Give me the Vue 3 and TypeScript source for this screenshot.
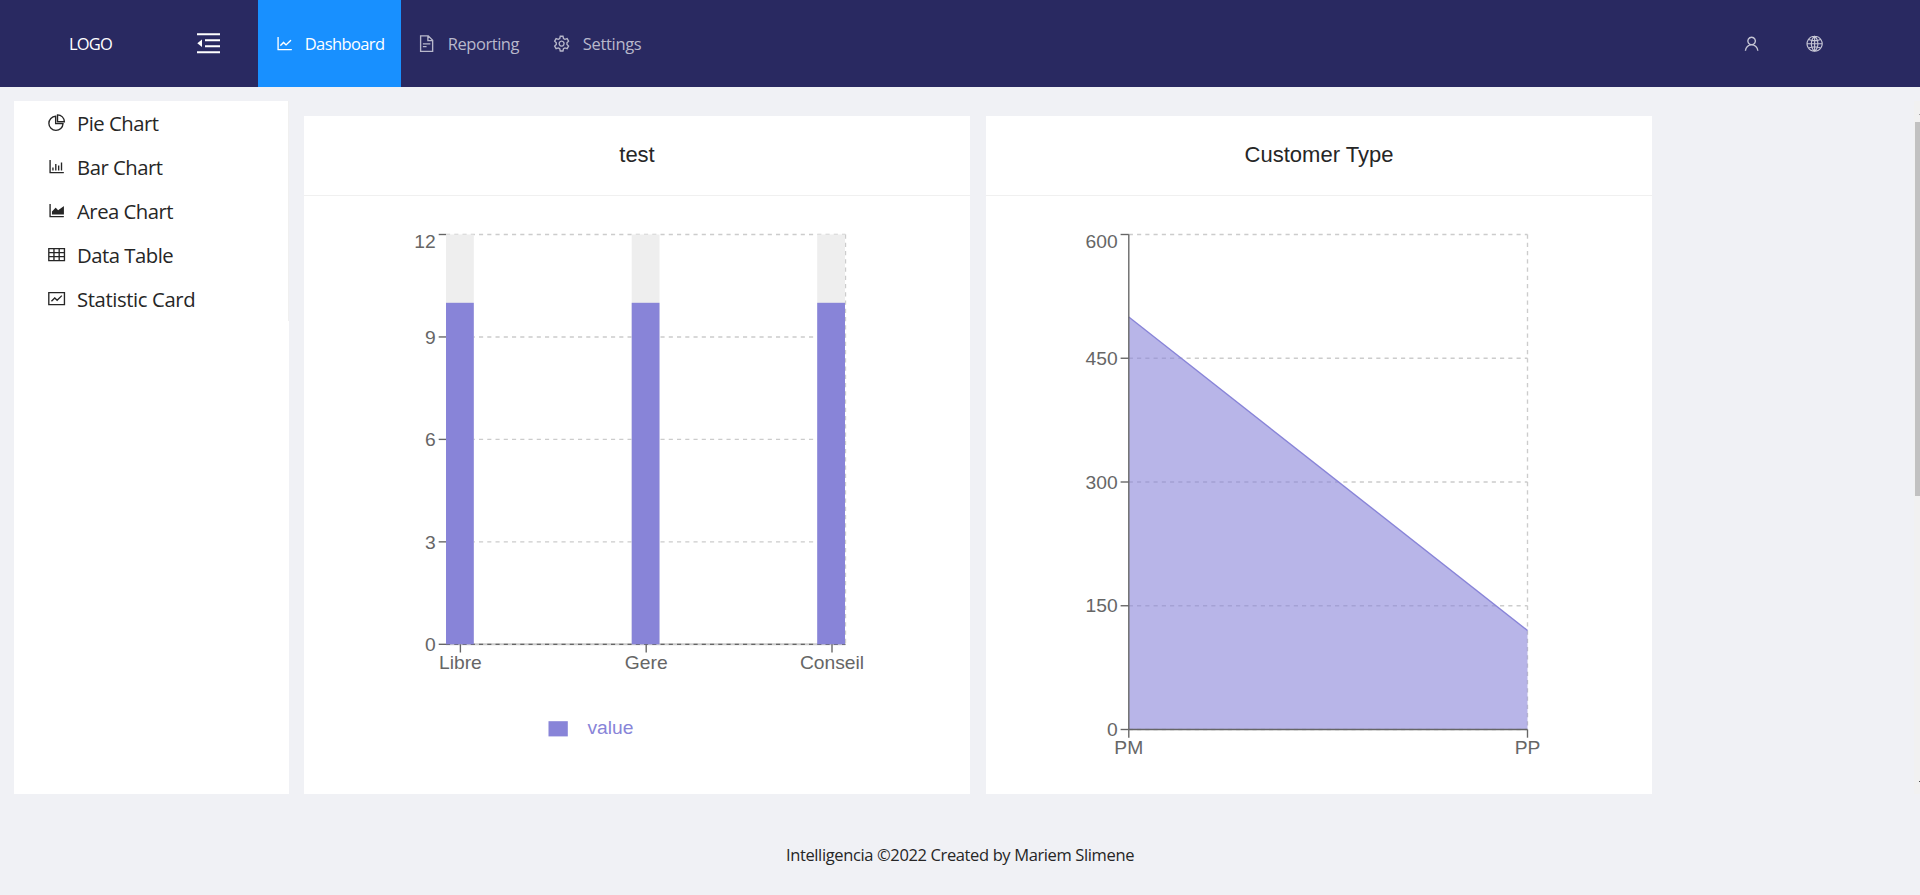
<script setup lang="ts">
type IconName = 'line' | 'file' | 'gear' | 'pie' | 'bar' | 'area' | 'table' | 'fund'

interface Entry {
  label: string
  icon: IconName
  cls: string
}

const nav: Entry[] = [
  { label: 'Dashboard', icon: 'line', cls: 'dashboard' },
  { label: 'Reporting', icon: 'file', cls: 'reporting' },
  { label: 'Settings', icon: 'gear', cls: 'settings' },
]

const tools: Entry[] = [
  { label: 'Pie Chart', icon: 'pie', cls: 't-pie' },
  { label: 'Bar Chart', icon: 'bar', cls: 't-bar' },
  { label: 'Area Chart', icon: 'area', cls: 't-area' },
  { label: 'Data Table', icon: 'table', cls: 't-table' },
  { label: 'Statistic Card', icon: 'fund', cls: 't-stat' },
]

const axes =
  'M888 792H200V168c0-4.4-3.6-8-8-8h-56c-4.4 0-8 3.6-8 8v688c0 4.4 3.6 8 8 8h752c4.4 0 8-3.6 8-8v-56c0-4.4-3.6-8-8-8z'

const filled: Partial<Record<IconName, string>> = {
  line:
    axes +
    'M305.8 637.7c3.1 3.1 8.1 3.1 11.3 0l138.3-137.6L583 628.5c3.1 3.1 8.2 3.1 11.3 0l275.4-275.3c3.1-3.1 3.1-8.2 0-11.3l-39.6-39.6c-3.1-3.1-8.2-3.1-11.3 0l-230 229.9L461.4 404c-3.1-3.1-8.2-3.1-11.3 0L266.3 586.7c-3.1 3.1-3.1 8.2 0 11.3l39.5 39.7z',
  bar: axes + 'M280 552h72v160h-72zM432 376h72v336h-72zM584 454h72v258h-72zM736 296h72v416h-72z',
  area:
    axes +
    'M272 720h620c4.4 0 8-3.6 8-8V284c0-7.2-8.7-10.7-13.7-5.7L592 488.6l-125.4-124a8 8 0 0 0-11.3 0l-189 189.6a7.9 7.9 0 0 0-2.3 5.6V712c0 4.4 3.6 8 8 8z',
}

const stroked: Partial<Record<IconName, string>> = {
  file: 'M192 100H600L832 332V924H192ZM580 100V352H832M312 524H712M312 672H508',
  pie: 'M460 172A376 376 0 1 0 852 564H460ZM560 100A364 364 0 0 1 924 464H560Z',
  table: 'M96 196H928V828H96ZM96 406H928M96 616H928M370 196V828M648 196V828',
  fund: 'M96 196H928V828H96ZM236 650L412 474L540 602L790 352',
  gear:
    'M440 122H584L612 240L688 284L806 248L882 378L796 466V558L882 646L806 776L688 740L612 784L584 902H440L412 784L336 740L218 776L142 646L228 558V466L142 378L218 248L336 284L412 240ZM512 382A130 130 0 1 1 511 382Z',
}

const barLeft = 142
const barTop = 38.5
const barBottom = 448.3
const barTicks = [12, 9, 6, 3, 0].map((v) => ({
  v,
  y: barBottom - (v / 12) * (barBottom - barTop),
}))
const bars = [
  { name: 'Libre', x: 142, tick: 156.4 },
  { name: 'Gere', x: 327.7, tick: 342.2 },
  { name: 'Conseil', x: 513.2, tick: 528 },
].map((b) => ({ ...b, value: 10 }))
const barY = barBottom - (10 / 12) * (barBottom - barTop)

const areaTop = 38.5
const areaBottom = 533.5
const scaleArea = (v: number) => areaBottom - (v / 600) * (areaBottom - areaTop)
const areaTicks = [600, 450, 300, 150, 0].map((v) => ({ v, y: scaleArea(v) }))
const x0 = 142.8
const x1 = 541.5
</script>

<template>
  <div class="page">
    <header class="header">
      <div class="logo">LOGO</div>
      <svg class="fold" viewBox="0 0 23 21">
        <path d="M0 1.2H23M8 7.3H23M8 13.3H23M0 19.3H23" stroke="#fff" stroke-width="1.9" fill="none" />
        <path d="M0.3 10.3L5 6.6V14Z" fill="#fff" />
      </svg>
      <nav class="nav">
        <a v-for="(n, i) in nav" :key="n.label" class="nav-item" :class="[n.cls, { active: i === 0 }]">
          <svg class="icon" viewBox="0 0 1024 1024">
            <path v-if="filled[n.icon]" :d="filled[n.icon]" class="fill" />
            <path v-else :d="stroked[n.icon]" class="stroke" />
          </svg>
          <span>{{ n.label }}</span>
        </a>
      </nav>
      <div class="actions">
        <svg class="icon" viewBox="0 0 1024 1024">
          <path class="stroke" d="M512 172A200 200 0 1 1 511 172ZM182 892C190 700 340 572 512 572S834 700 842 892" />
        </svg>
        <svg class="icon" viewBox="0 0 1024 1024">
          <path
            class="stroke thin"
            d="M512 118A400 400 0 1 1 511 118ZM512 118V918M112 518H912M512 118C280 310 280 726 512 918C744 726 744 310 512 118ZM200 290C390 370 634 370 824 290M200 746C390 666 634 666 824 746"
          />
        </svg>
      </div>
    </header>

    <main class="body">
      <aside class="sidebar">
        <ul class="tools">
          <li v-for="t in tools" :key="t.label" :class="t.cls">
            <svg class="icon" viewBox="0 0 1024 1024">
              <path v-if="filled[t.icon]" :d="filled[t.icon]" class="fill" />
              <path v-else :d="stroked[t.icon]" class="stroke" />
            </svg>
            <span>{{ t.label }}</span>
          </li>
        </ul>
      </aside>

      <section class="card">
        <h2>test</h2>
        <svg class="chart" width="666" height="598" viewBox="0 0 666 598">
          <g class="grid">
            <line v-for="t in barTicks" :key="t.v" :x1="barLeft" :x2="541.4" :y1="t.y" :y2="t.y" />
            <line x1="541.5" x2="541.5" :y1="barTop" :y2="barBottom" />
          </g>
          <rect v-for="b in bars" :key="b.name" :x="b.x" :y="barTop" width="27.8" :height="barBottom - barTop" fill="#eee" />
          <line class="base" :x1="barLeft" x2="541.4" :y1="barBottom" :y2="barBottom" />
          <line class="base-dash" :x1="barLeft" x2="541.4" :y1="barBottom" :y2="barBottom" />
          <rect v-for="b in bars" :key="b.name + 'v'" :x="b.x" :y="barY" width="27.8" :height="barBottom - barY" fill="#8884d8" />
          <g class="axis">
            <line v-for="t in barTicks" :key="t.v" x1="134.7" :x2="barLeft" :y1="t.y" :y2="t.y" />
            <line v-for="b in bars" :key="b.name" :x1="b.tick" :x2="b.tick" :y1="barBottom" :y2="barBottom + 8.2" />
          </g>
          <g class="labels">
            <text v-for="t in barTicks" :key="t.v" x="131.7" :y="t.y + (t.v === 12 ? 13.4 : 6.7)" text-anchor="end">{{ t.v }}</text>
            <text v-for="b in bars" :key="b.name" :x="b.tick" y="473" text-anchor="middle">{{ b.name }}</text>
            <rect x="244.5" y="525.2" width="19.3" height="15.2" fill="#8884d8" />
            <text x="283.4" y="538" class="legend">value</text>
          </g>
        </svg>
      </section>

      <section class="card">
        <h2>Customer Type</h2>
        <svg class="chart" width="666" height="598" viewBox="0 0 666 598">
          <g class="grid">
            <line v-for="t in areaTicks" :key="t.v" :x1="x0" :x2="x1" :y1="t.y" :y2="t.y" />
            <line :x1="x1" :x2="x1" :y1="areaTop" :y2="areaBottom" />
          </g>
          <path :d="`M${x0} ${scaleArea(500)}L${x1} ${scaleArea(120)}V${areaBottom}H${x0}Z`" fill="#8884d8" fill-opacity="0.6" />
          <path :d="`M${x0} ${scaleArea(500)}L${x1} ${scaleArea(120)}`" stroke="#8884d8" stroke-width="1.375" />
          <g class="axis">
            <line :x1="x0" :x2="x0" :y1="areaTop" :y2="areaBottom" />
            <line :x1="x0" :x2="x1" :y1="areaBottom" :y2="areaBottom" />
            <line v-for="t in areaTicks" :key="t.v" :x1="x0 - 8.2" :x2="x0" :y1="t.y" :y2="t.y" />
            <line :x1="x0" :x2="x0" :y1="areaBottom" :y2="areaBottom + 8.2" />
            <line :x1="x1" :x2="x1" :y1="areaBottom" :y2="areaBottom + 8.2" />
          </g>
          <g class="labels">
            <text v-for="t in areaTicks" :key="t.v" x="131.7" :y="t.y + (t.v === 600 ? 13.4 : 6.7)" text-anchor="end">{{ t.v }}</text>
            <text :x="x0" y="558" text-anchor="middle">PM</text>
            <text :x="x1" y="558" text-anchor="middle">PP</text>
          </g>
        </svg>
      </section>

      <div class="scrollbar">
        <i class="arrow up"></i>
        <div class="thumb"></div>
        <i class="arrow down"></i>
      </div>
    </main>

    <footer class="footer"><span>Intelligencia ©2022 Created by Mariem Slimene</span></footer>
  </div>
</template>

<style>
body {
  margin: 0;
  overflow: hidden;
}
</style>

<style scoped>
.page {
  width: 1920px;
  height: 895px;
  box-sizing: border-box;
  display: flex;
  flex-direction: column;
  overflow: hidden;
  background: #f0f1f5;
  color: #262626;
  font-family: 'Open Sans', 'Noto Sans', sans-serif;
}
.header {
  height: 87px;
  flex: none;
  display: flex;
  align-items: center;
  background: #292961;
  color: #fff;
  font-size: 16.5px;
}
.logo {
  width: 128px;
  padding-left: 69px;
  letter-spacing: -0.85px;
}
.fold {
  width: 23px;
  height: 21px;
  margin-right: 38px;
}
.nav {
  display: flex;
  height: 100%;
}
.nav-item {
  box-sizing: border-box;
  display: flex;
  align-items: center;
  padding-left: 16.5px;
  gap: 11px;
  color: #b8b8cb;
  white-space: nowrap;
  letter-spacing: -0.6px;
}
.active {
  background: #1890ff;
  color: #fff;
}
.dashboard { width: 143px; }
.reporting {
  width: 135px;
  letter-spacing: -0.45px;
}
.settings {
  width: 122px;
  letter-spacing: -0.32px;
}
.icon {
  width: 19.25px;
  height: 19.25px;
  flex: none;
}
.reporting .icon,
.settings .icon {
  margin-left: -0.5px;
  margin-right: 0.5px;
}
.fill { fill: currentColor; }
.stroke {
  fill: none;
  stroke: currentColor;
  stroke-width: 72;
}
.thin { stroke-width: 60; }
.actions {
  display: flex;
  gap: 43.7px;
  margin-left: auto;
  margin-right: 96px;
  color: #c6c6d5;
}
.body {
  height: 693px;
  flex: none;
  margin-top: 14px;
  padding-left: 14px;
  display: flex;
  align-items: flex-start;
}
.sidebar {
  width: 275px;
  height: 693px;
  background: #fff;
  margin-right: 15px;
}
.tools {
  list-style: none;
  margin: 0;
  padding: 0;
  border-right: 1px solid #f0f0f0;
}
.tools li {
  height: 44px;
  box-sizing: border-box;
  padding-left: 32.5px;
  display: flex;
  align-items: center;
  gap: 11.3px;
  font-size: 20.3px;
  letter-spacing: -0.5px;
  white-space: nowrap;
}
.tools .t-stat { letter-spacing: -0.4px; }
.card {
  width: 666px;
  height: 678px;
  margin-top: 15px;
  margin-right: 16px;
  background: #fff;
}
.card h2 {
  margin: 0;
  height: 79px;
  border-bottom: 1px solid #f0f0f0;
  text-align: center;
  font: 400 22px/78px 'Liberation Sans', Arial, sans-serif;
}
.chart { display: block; }
.grid line {
  stroke: #ccc;
  stroke-width: 1.375;
  stroke-dasharray: 4.125;
}
.axis line {
  stroke: #666;
  stroke-width: 1.375;
}
.base {
  stroke: #ccc;
  stroke-width: 2;
}
.base-dash {
  stroke: #666;
  stroke-width: 1.2;
  stroke-dasharray: 4.125;
}
.labels {
  font-family: 'Liberation Sans', Arial, sans-serif;
  font-size: 19.25px;
  fill: #666;
}
.labels .legend { fill: #8884d8; }
.scrollbar {
  width: 6px;
  height: 693px;
  box-sizing: border-box;
  padding: 13px 0 12px 1px;
  margin-left: auto;
  display: flex;
  flex-direction: column;
  background: #f1f1f1;
}
.thumb {
  height: 374px;
  margin-top: 7px;
  background: #c1c1c1;
}
.arrow {
  width: 1px;
  height: 1px;
  align-self: flex-end;
}
.up { background: #a3a3a3; }
.down {
  margin-top: auto;
  background: #505050;
}
.footer {
  flex: 1;
  display: flex;
  justify-content: center;
  padding-top: 49px;
  font-size: 16.5px;
  line-height: 24px;
  letter-spacing: -0.37px;
}
</style>
